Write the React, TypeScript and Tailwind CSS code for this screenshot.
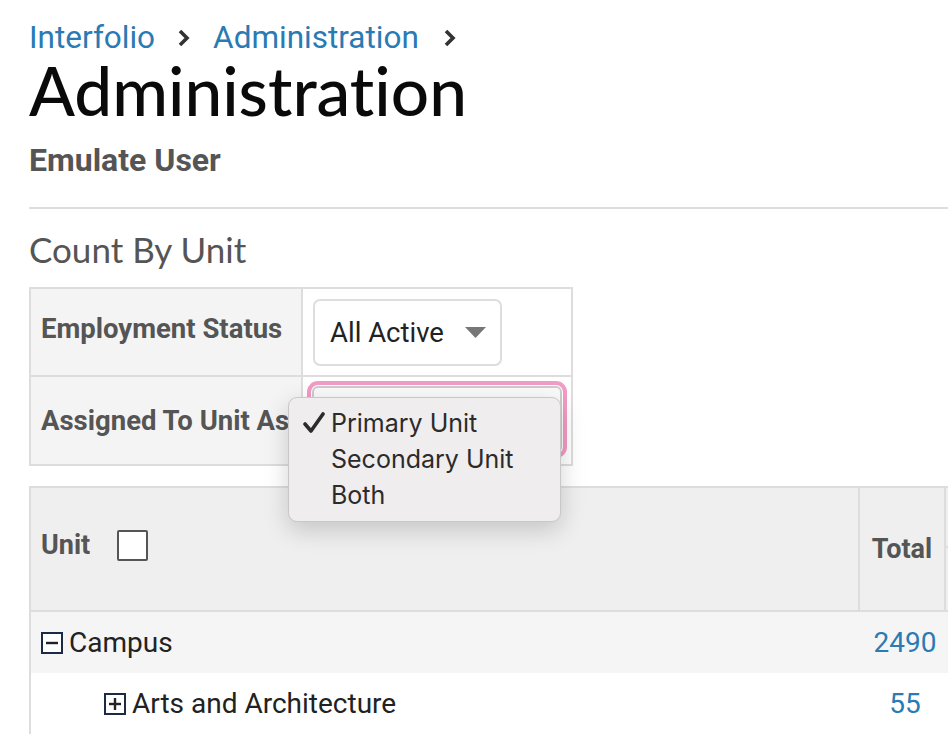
import React from "react";

const Box = ({ plus }: { plus?: boolean }) => (
  <svg width="22" height="22" viewBox="0 0 22 22" className="shrink-0">
    <rect x="1" y="1" width="20" height="20" fill="#fff" stroke="#1b2a45" strokeWidth="2" />
    <line x1="5" y1="11" x2="17" y2="11" stroke="#222" strokeWidth="2.4" />
    {plus && <line x1="11" y1="5" x2="11" y2="17" stroke="#222" strokeWidth="2.4" />}
  </svg>
);

export default function App() {
  return (
    <div className="w-[948px] h-[734px] overflow-hidden bg-white relative" style={{ fontFamily: "Roboto, 'Liberation Sans', sans-serif" }}>
      <div className="pl-[29px]">
        {/* breadcrumb */}
        <div className="flex items-center pt-[20px] h-[56px] leading-[36px] text-[31.5px] text-[#2a7ab3]">
          <span>Interfolio</span>
          <svg width="14" height="20" viewBox="0 0 14 20" className="ml-[22px] mr-[22px]">
            <path d="M3 3 L10 10 L3 17" stroke="#333" strokeWidth="3.6" fill="none" />
          </svg>
          <span>Administration</span>
          <svg width="14" height="20" viewBox="0 0 14 20" className="ml-[24px]">
            <path d="M3 3 L10 10 L3 17" stroke="#333" strokeWidth="3.6" fill="none" />
          </svg>
        </div>
        <h1
          className="text-[67.5px] leading-[68px] font-medium text-[#0a0a0a]"
          style={{ fontFamily: "Lato, 'Open Sans', sans-serif", fontVariantLigatures: "none" }}
        >
          Administration
        </h1>
        <div className="mt-[16px] text-[32px] leading-[40px] font-bold text-[#555]">Emulate User</div>
        <div className="mt-[27px] h-[2px] bg-[#ddd]" />
        <div className="mt-[19px] text-[35px] leading-[42px] font-normal text-[#555]" style={{ fontFamily: "Lato, 'Open Sans', sans-serif" }}>
          Count By Unit
        </div>

        {/* filter table */}
        <div className="relative mt-[17px] w-[544px] border-2 border-[#ddd]">
          <div className="grid grid-cols-[272px_1fr]">
            <div className="h-[88px] bg-[#f4f4f4] border-r-2 border-b-2 border-[#ddd] flex items-center pl-[10px] pb-[6px] text-[27.5px] font-bold text-[#555]">
              Employment Status
            </div>
            <div className="h-[88px] border-b-2 border-[#ddd] flex items-start pt-[10px] pl-[10px]">
              <div className="w-[189px] h-[67px] rounded-[7px] border-2 border-[#ddd] flex items-center pl-[15px] pr-[14px] justify-between text-[27.5px] text-[#222]">
                <span>All Active</span>
                <svg width="21" height="11" viewBox="0 0 21 11">
                  <path d="M0 0 L21 0 L10.5 11 Z" fill="#777" />
                </svg>
              </div>
            </div>
            <div className="h-[87px] bg-[#f4f4f4] border-r-2 border-[#ddd] flex items-center pl-[10px] text-[27.5px] font-bold text-[#555] overflow-hidden whitespace-nowrap">
              Assigned To Unit As
            </div>
            <div className="h-[87px] flex items-start pt-[4px] pl-[4px]">
              <div className="w-[260px] h-[77px] rounded-[11px] border-[4px] border-[#f29bc4] p-[1px]">
                <div className="w-full h-full rounded-[6px] border-2 border-[#ccc] bg-[#fafafa]" />
              </div>
            </div>
          </div>

          {/* dropdown menu */}
          <div
            className="absolute left-[257px] top-[108px] w-[273px] h-[125px] rounded-[9px] border border-[#c9c7c8] bg-[#efedee] shadow-[0_8px_24px_rgba(0,0,0,0.18)] pt-[7px] text-[25px] leading-[36px] text-[#2b2b2b] z-10"
            style={{ fontFamily: "Inter, 'Noto Sans', sans-serif" }}
          >
            <div className="flex items-center">
              <span className="w-[42px] flex justify-end pr-[6px]">
                <svg width="22" height="22" viewBox="0 0 22 22">
                  <path d="M2 12 L8 19 L20 2" stroke="#2b2b2b" strokeWidth="3.6" fill="none" strokeLinecap="round" strokeLinejoin="round" />
                </svg>
              </span>
              <span>Primary Unit</span>
            </div>
            <div className="pl-[42px]">Secondary Unit</div>
            <div className="pl-[42px]">Both</div>
          </div>
        </div>

        {/* main table */}
        <div className="mt-[20px] w-[1000px] border-l-2 border-t-2 border-[#ddd]">
          <div className="flex h-[124px] bg-[#efefef] border-b-2 border-[#ddd]">
            <div className="w-[829px] border-r-2 border-[#ddd] flex items-center pl-[10px] pb-[8px] text-[27px] font-bold text-[#555]">
              <span>Unit</span>
              <span className="ml-[27px] w-[31px] h-[31px] border-2 border-[#555] bg-white rounded-[2px]" />
            </div>
            <div className="w-[86px] border-r-2 border-[#ddd] flex items-center justify-center text-[27px] font-bold text-[#555]">
              Total
            </div>
            <div className="flex-1 flex flex-col">
              <div className="h-[60px] border-b-2 border-[#ddd]" />
            </div>
          </div>
          <div className="flex h-[61px] bg-[#f5f5f5] items-center text-[28px] text-[#222]">
            <div className="w-[831px] flex items-center pl-[10px] gap-[6px]">
              <Box />
              <span>Campus</span>
            </div>
            <div className="w-[86px] text-center text-[#2a7ab3]">2490</div>
          </div>
          <div className="flex h-[61px] bg-white items-center text-[28px] text-[#222]">
            <div className="w-[831px] flex items-center pl-[73px] gap-[6px]">
              <Box plus />
              <span>Arts and Architecture</span>
            </div>
            <div className="w-[86px] text-center text-[#2a7ab3]">55</div>
          </div>
        </div>
      </div>
    </div>
  );
}
